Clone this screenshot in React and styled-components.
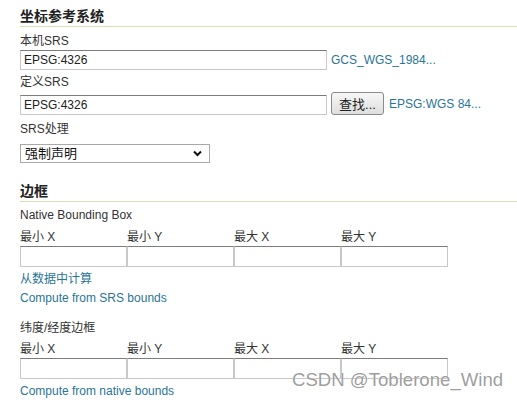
import React from "react";
import styled, { createGlobalStyle } from "styled-components";

const Global = createGlobalStyle`
  html, body { margin: 0; padding: 0; background: #fff; }
  body {
    font-family: "Liberation Sans", "Noto Sans CJK SC", Arial, sans-serif;
    font-size: 12px;
    color: #333;
  }
`;

const Page = styled.div`
  position: relative;
  width: 517px;
  height: 400px;
  overflow: hidden;
  padding-left: 20px;
  box-sizing: border-box;
`;

const Heading = styled.h2`
  margin: ${(p) => p.$top || 0}px -20px 0 0;
  padding: 8px 0 2px;
  font-size: 14px;
  line-height: 16px;
  font-weight: bold;
  color: #222;
  border-bottom: 1px solid #dcdcb8;
`;

const Label = styled.div`
  margin-top: ${(p) => p.$top || 0}px;
  line-height: 14px;
  height: 14px;
  color: #333;
`;

const Row = styled.div`
  display: flex;
  align-items: center;
  margin-top: ${(p) => p.$top || 0}px;
`;

const TextInput = styled.input`
  box-sizing: border-box;
  width: ${(p) => p.$w || 307}px;
  height: ${(p) => p.$h || 20}px;
  margin: ${(p) => p.$mt || 0}px 0 0 0;
  padding: 0 3px;
  font-family: "Liberation Sans", "Noto Sans CJK SC", Arial, sans-serif;
  font-size: 12px;
  color: #222;
  border: 1px solid #c8c8c8;
  border-top-color: #7c7c7c;
  background: #fff;
  outline: none;
`;

const Link = styled.a`
  color: #2a7597;
  text-decoration: none;
  margin-left: ${(p) => p.$ml || 0}px;
  margin-top: ${(p) => p.$top || 0}px;
  line-height: ${(p) => p.$lh || 14}px;
  display: block;
`;

const Button = styled.button`
  box-sizing: border-box;
  height: 23px;
  width: 53px;
  margin-left: 4px;
  padding: 0;
  font-family: "Liberation Sans", "Noto Sans CJK SC", Arial, sans-serif;
  font-size: 13px;
  color: #222;
  border: 1px solid #8a8a8a;
  border-radius: 3px;
  background: linear-gradient(#f7f7f7, #dedede);
`;

const SelectWrap = styled.div`
  position: relative;
  width: 190px;
  height: 19px;
  margin-top: 8px;
`;

const Select = styled.select`
  appearance: none;
  box-sizing: border-box;
  width: 100%;
  height: 100%;
  padding: 0 4px;
  font-family: "Liberation Sans", "Noto Sans CJK SC", Arial, sans-serif;
  font-size: 13px;
  color: #111;
  border: 1px solid #a9a9a9;
  background: #fff;
  border-radius: 0;
  outline: none;
`;

const Chevron = styled.svg`
  position: absolute;
  right: 8px;
  top: 6px;
  pointer-events: none;
`;

const Grid = styled.div`
  display: grid;
  grid-template-columns: repeat(4, 107px);
  margin-top: ${(p) => p.$top || 0}px;
`;

const Cell = styled.div`
  display: flex;
  flex-direction: column;
`;

const GridLabel = styled.div`
  line-height: 14px;
  height: 14px;
  margin-bottom: 2px;
`;

const Watermark = styled.div`
  position: absolute;
  left: 292px;
  top: 369px;
  font-family: "Liberation Sans", "Noto Sans CJK SC", Arial, sans-serif;
  font-size: 18.6px;
  line-height: 22px;
  color: rgba(140, 140, 140, 0.85);
  text-shadow: 0 0 1px #fff;
  white-space: nowrap;
`;

function BoxGrid({ top }) {
  const labels = ["最小 X", "最小 Y", "最大 X", "最大 Y"];
  return (
    <Grid $top={top}>
      {labels.map((l) => (
        <Cell key={l}>
          <GridLabel>{l}</GridLabel>
          <TextInput $w={107} $h={21} defaultValue="" />
        </Cell>
      ))}
    </Grid>
  );
}

export default function App() {
  return (
    <>
      <Global />
      <Page>
        <Heading>坐标参考系统</Heading>
        <Label $top={7}>本机SRS</Label>
        <Row $top={2}>
          <TextInput defaultValue="EPSG:4326" />
          <Link $ml={4}>GCS_WGS_1984...</Link>
        </Row>
        <Label $top={5}>定义SRS</Label>
        <Row $top={3}>
          <TextInput defaultValue="EPSG:4326" $mt={3} />
          <Button>查找...</Button>
          <Link $ml={5}>EPSG:WGS 84...</Link>
        </Row>
        <Label $top={7}>SRS处理</Label>
        <SelectWrap>
          <Select defaultValue="a">
            <option value="a">强制声明</option>
          </Select>
          <Chevron width="9" height="7" viewBox="0 0 9 7">
            <path d="M1 1.5 L4.5 5 L8 1.5" fill="none" stroke="#111" strokeWidth="2" />
          </Chevron>
        </SelectWrap>
        <Heading $top={12}>边框</Heading>
        <Label $top={6}>Native Bounding Box</Label>
        <BoxGrid top={8} />
        <Link $top={3} $lh={19}>从数据中计算</Link>
        <Link $lh={19}>Compute from SRS bounds</Link>
        <Label $top={13}>纬度/经度边框</Label>
        <BoxGrid top={7} />
        <Link $top={3} $lh={19}>Compute from native bounds</Link>
        <Watermark>CSDN @Toblerone_Wind</Watermark>
      </Page>
    </>
  );
}
